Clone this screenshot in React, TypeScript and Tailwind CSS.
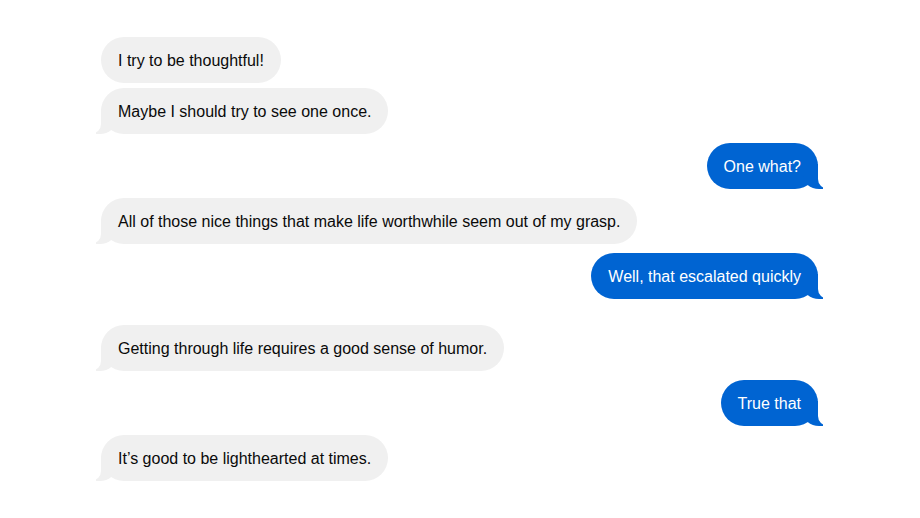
import clsx from "clsx";

type Message = {
  id: number;
  text: string;
  fromMe: boolean;
  tail: boolean;
  gap: string;
};

const messages: Message[] = [
  { id: 1, text: "I try to be thoughtful!", fromMe: false, tail: false, gap: "mt-0" },
  { id: 2, text: "Maybe I should try to see one once.", fromMe: false, tail: true, gap: "mt-[5px]" },
  { id: 3, text: "One what?", fromMe: true, tail: true, gap: "mt-[9px]" },
  {
    id: 4,
    text: "All of those nice things that make life worthwhile seem out of my grasp.",
    fromMe: false,
    tail: true,
    gap: "mt-[9px]",
  },
  { id: 5, text: "Well, that escalated quickly", fromMe: true, tail: true, gap: "mt-[9px]" },
  {
    id: 6,
    text: "Getting through life requires a good sense of humor.",
    fromMe: false,
    tail: true,
    gap: "mt-[26px]",
  },
  { id: 7, text: "True that", fromMe: true, tail: true, gap: "mt-[9px]" },
  { id: 8, text: "It\u2019s good to be lighthearted at times.", fromMe: false, tail: true, gap: "mt-[9px]" },
];

function Bubble(props: { message: Message }) {
  const { message } = props;

  return (
    <p
      className={clsx(
        "relative rounded-[23px] px-[17px] pt-[12px] pb-[10px] text-[16px] leading-6",
        message.gap,
        message.fromMe
          ? "self-end bg-[#0064d2] text-white"
          : "self-start bg-[#f0f0f0] text-[#0a0a0a]",
        message.tail &&
          "before:absolute before:bottom-0 before:h-[25px] before:w-5 before:content-[''] after:absolute after:bottom-0 after:h-[25px] after:w-[26px] after:bg-white after:content-['']",
        message.tail &&
          (message.fromMe
            ? "before:-right-[5px] before:rounded-bl-[16px_14px] before:bg-[#0064d2] after:-right-[26px] after:rounded-bl-[10px]"
            : "before:-left-[5px] before:rounded-br-[16px_14px] before:bg-[#f0f0f0] after:-left-[26px] after:rounded-br-[10px]"),
      )}
    >
      {message.text}
    </p>
  );
}

export default function App() {
  return (
    <div className="h-[518px] w-[920px] overflow-hidden bg-white font-['Liberation_Sans',Arial,sans-serif]">
      <div className="flex flex-col pt-[37px] pr-[102px] pl-[101px]">
        {messages.map((message) => (
          <Bubble key={message.id} message={message} />
        ))}
      </div>
    </div>
  );
}
